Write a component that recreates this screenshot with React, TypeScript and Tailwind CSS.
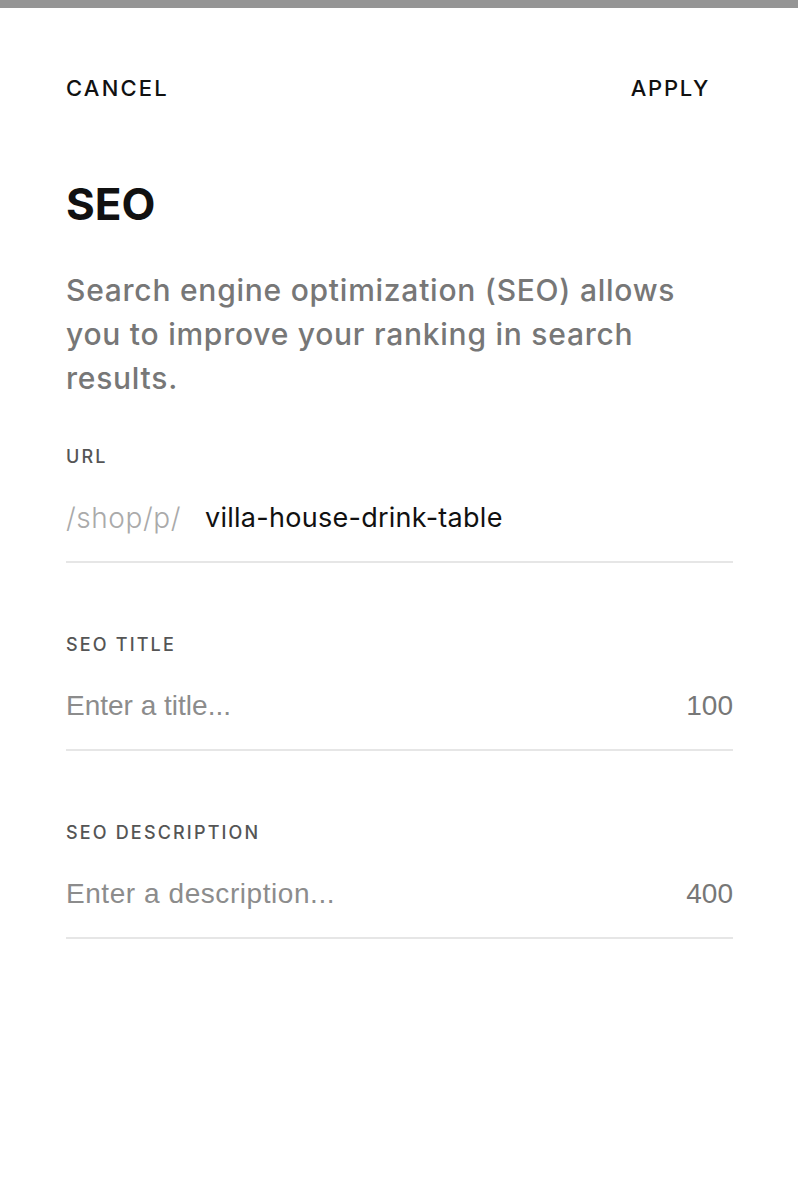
import React from "react";

const inter = { fontFamily: 'Inter, "Liberation Sans", Arial, sans-serif' };
const helv = { fontFamily: '"Liberation Sans", Arial, sans-serif' };

function Field({ label, children }: { label: string; children: React.ReactNode }) {
  return (
    <div className="flex flex-col">
      <div className="h-[20px] text-[18px] leading-[20px] font-medium tracking-[0.12em] text-[#555555]">{label}</div>
      <div className="mt-[31px] flex h-[40px] items-center">{children}</div>
      <div className="mt-[23px] h-[2px] bg-[#e6e6e6]" />
    </div>
  );
}

export default function App() {
  return (
    <div className="min-h-[1204px] bg-white" style={inter}>
      <div className="h-[8px] bg-[#959595]" />
      <div className="flex items-center justify-between pl-[66px] pr-[88px] pt-[64px]">
        <span className="text-[22px] leading-[32px] font-medium tracking-[0.1em] text-[#111]">CANCEL</span>
        <span className="text-[22px] leading-[32px] font-medium tracking-[0.08em] text-[#111]">APPLY</span>
      </div>
      <div className="pl-[66px] pr-[65px]">
        <h1 className="mt-[72px] text-[44px] leading-[56px] font-bold text-[#111]">SEO</h1>
        <p className="mt-[36px] text-[30px] leading-[44px] font-medium tracking-[0.025em] text-[#777777]">
          Search engine optimization (SEO) allows you to improve your ranking in search results.
        </p>
        <div className="mt-[47px] flex flex-col gap-[72px]">
          <Field label="URL">
            <span className="text-[28px] font-light tracking-[0.02em] text-[#aaaaaa]">/shop/p/</span>
            <span className="ml-[24px] text-[27px] tracking-[0.01em] text-[#111]">villa-house-drink-table</span>
          </Field>
          <Field label="SEO TITLE">
            <span className="flex-1 text-[28px] text-[#8c8c8c]" style={helv}>Enter a title...</span>
            <span className="text-[28px] text-[#777777]" style={helv}>100</span>
          </Field>
          <Field label="SEO DESCRIPTION">
            <span className="flex-1 text-[28px] tracking-[0.02em] text-[#8c8c8c]" style={helv}>Enter a description...</span>
            <span className="text-[28px] text-[#777777]" style={helv}>400</span>
          </Field>
        </div>
      </div>
    </div>
  );
}
